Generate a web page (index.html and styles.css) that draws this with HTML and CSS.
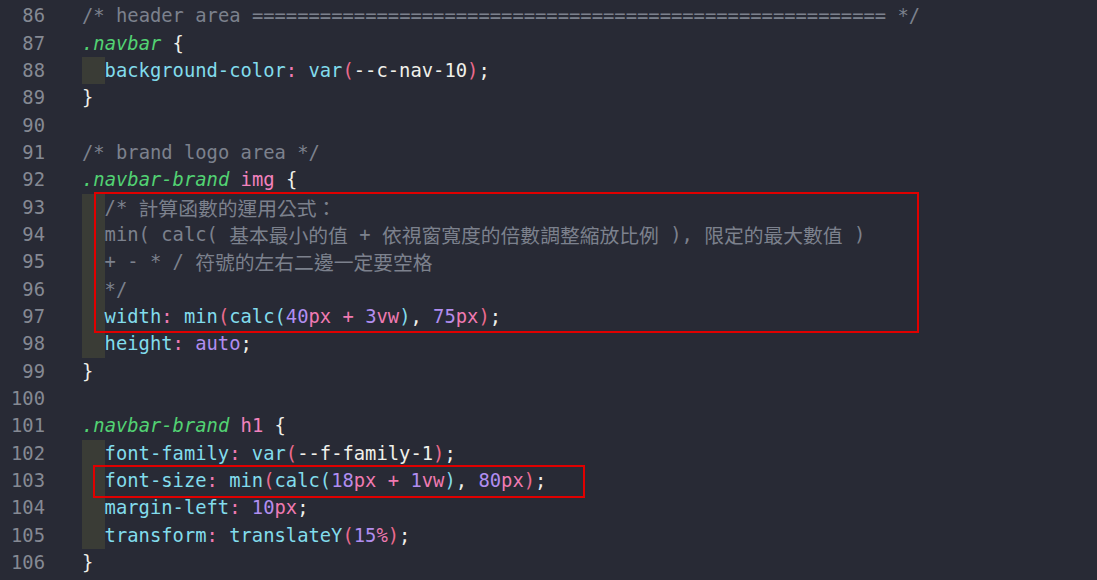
FILE: index.html
```html
<!DOCTYPE html>
<html lang="zh-Hant">
<head>
<meta charset="utf-8">
<title>styles.css</title>
<link rel="stylesheet" href="styles.css">
</head>
<body>
<div class="editor">
  <div class="line"><span class="ln">86</span><span class="code"><span class="cm">/* header area ======================================================== */</span></span></div>
  <div class="line"><span class="ln">87</span><span class="code"><span class="sel">.navbar</span><span class="w"> {</span></span></div>
  <div class="line"><span class="ln">88</span><span class="ind"></span><span class="code"><span class="p">background-color</span><span class="pk">:</span> <span class="p">var</span><span class="par">(</span><span class="w">--c-nav-10</span><span class="par">)</span><span class="w">;</span></span></div>
  <div class="line"><span class="ln">89</span><span class="code"><span class="w">}</span></span></div>
  <div class="line"><span class="ln">90</span><span class="code"></span></div>
  <div class="line"><span class="ln">91</span><span class="code"><span class="cm">/* brand logo area */</span></span></div>
  <div class="line"><span class="ln">92</span><span class="code"><span class="sel">.navbar-brand</span> <span class="tag">img</span><span class="w"> {</span></span></div>
  <div class="mark mark-a">
    <div class="line"><span class="ln">93</span><span class="ind"></span><span class="code cm">/* <span class="zh">計算函數的運用公式：</span></span></div>
    <div class="line"><span class="ln">94</span><span class="ind"></span><span class="code cm">min( calc( <span class="zh">基本最小的值</span> + <span class="zh">依視窗寬度的倍數調整縮放比例</span> ), <span class="zh">限定的最大數值</span> )</span></div>
    <div class="line"><span class="ln">95</span><span class="ind"></span><span class="code cm">+ - * / <span class="zh">符號的左右二邊一定要空格</span></span></div>
    <div class="line"><span class="ln">96</span><span class="ind"></span><span class="code cm">*/</span></div>
    <div class="line"><span class="ln">97</span><span class="ind"></span><span class="code"><span class="p">width</span><span class="pk">:</span> <span class="p">min</span><span class="par">(</span><span class="p">calc(</span><span class="num">40</span><span class="pk">px + </span><span class="num">3</span><span class="pk">vw</span><span class="p">)</span><span class="w">, </span><span class="num">75</span><span class="pk">px</span><span class="par">)</span><span class="w">;</span></span></div>
  </div>
  <div class="line"><span class="ln">98</span><span class="ind"></span><span class="code"><span class="p">height</span><span class="pk">:</span> <span class="num">auto</span><span class="w">;</span></span></div>
  <div class="line"><span class="ln">99</span><span class="code"><span class="w">}</span></span></div>
  <div class="line"><span class="ln">100</span><span class="code"></span></div>
  <div class="line"><span class="ln">101</span><span class="code"><span class="sel">.navbar-brand</span> <span class="tag">h1</span><span class="w"> {</span></span></div>
  <div class="line"><span class="ln">102</span><span class="ind"></span><span class="code"><span class="p">font-family</span><span class="pk">:</span> <span class="p">var</span><span class="par">(</span><span class="w">--f-family-1</span><span class="par">)</span><span class="w">;</span></span></div>
  <div class="mark mark-b">
    <div class="line"><span class="ln">103</span><span class="ind"></span><span class="code"><span class="p">font-size</span><span class="pk">:</span> <span class="p">min</span><span class="par">(</span><span class="p">calc(</span><span class="num">18</span><span class="pk">px + </span><span class="num">1</span><span class="pk">vw</span><span class="p">)</span><span class="w">, </span><span class="num">80</span><span class="pk">px</span><span class="par">)</span><span class="w">;</span></span></div>
  </div>
  <div class="line"><span class="ln">104</span><span class="ind"></span><span class="code"><span class="p">margin-left</span><span class="pk">:</span> <span class="num">10</span><span class="pk">px</span><span class="w">;</span></span></div>
  <div class="line"><span class="ln">105</span><span class="ind"></span><span class="code"><span class="p">transform</span><span class="pk">:</span> <span class="p">translateY</span><span class="par">(</span><span class="num">15</span><span class="pk">%</span><span class="par">)</span><span class="w">;</span></span></div>
  <div class="line"><span class="ln">106</span><span class="code"><span class="w">}</span></span></div>
</div>
</body>
</html>
```

FILE: styles.css
```css
html, body {
  margin: 0;
  padding: 0;
  background: #282a35;
  overflow: hidden;
}

.editor {
  width: 1097px;
  height: 580px;
  box-sizing: border-box;
  padding-top: 2.3px;
  font-family: "DejaVu Sans Mono", "Noto Sans CJK TC", monospace;
  font-size: 18.82px;
  color: #f0f0ea;
}

.line {
  display: flex;
  height: 27.35px;
  line-height: 27.35px;
  white-space: pre;
}

.ln {
  flex: 0 0 45px;
  text-align: right;
  margin-right: 37px;
  color: #858993;
}

.ind {
  flex: 0 0 22.6px;
  background: #3a3c36;
}

.code {
  white-space: pre;
}

.zh {
  font-family: "Noto Sans CJK TC", sans-serif;
  font-size: 19.8px;
  line-height: 27.35px;
  vertical-align: top;
}

.cm { color: #7c818d; }
.sel { color: #52d273; font-style: italic; }
.tag { color: #f282be; }
.w { color: #f0f0ea; }
.p { color: #82dcec; }
.pk { color: #f07ab2; }
.par { color: #ec6a8e; }
.num { color: #b18ef0; }

.mark {
  position: relative;
}

.mark::after {
  content: "";
  position: absolute;
  border: 2px solid #e00000;
  pointer-events: none;
}

.mark-a::after {
  top: -2px;
  bottom: -3px;
  left: 94px;
  width: 821px;
}

.mark-b::after {
  top: -2px;
  bottom: -4px;
  left: 93px;
  width: 488px;
}
```
